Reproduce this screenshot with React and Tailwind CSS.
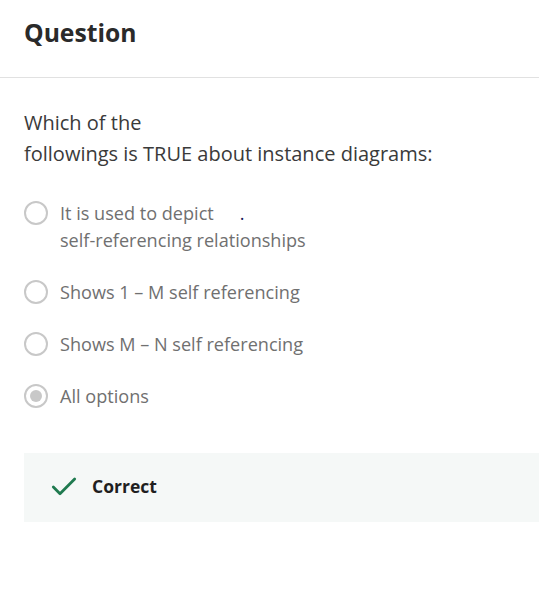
import { Check } from 'lucide-react';

const options = [
  { label: ['It is used to depict', 'self-referencing relationships'], checked: false },
  { label: ['Shows 1 – M self referencing'], checked: false },
  { label: ['Shows M – N self referencing'], checked: false },
  { label: ['All options'], checked: true },
];

const Radio = ({ checked }) => (
  <span className="w-6 h-6 rounded-full border-2 border-[#c8c8c8] flex items-center justify-center shrink-0 bg-white">
    {checked && <span className="w-3 h-3 rounded-full bg-[#c8c8c8]" />}
  </span>
);

export default function App() {
  return (
    <div className="w-[539px] h-[607px] bg-white overflow-hidden font-['Open_Sans',sans-serif]">
      <div className="px-6 pt-[15px] pb-[26px] border-b border-[#e1e1e1]">
        <h2 className="text-[24.7px] font-bold text-[#2a2a2a] leading-[36px]">Question</h2>
      </div>

      <div className="pl-6 pt-[29px]">
        <p className="text-[20px] leading-[31px] text-[#3a3a3a]">
          Which of the
          <br />
          followings is TRUE about instance diagrams:
        </p>

        <div className="mt-[31px] flex flex-col gap-[25px]">
          {options.map((opt, i) => (
            <label key={i} className="flex items-start gap-[12px]">
              <span className="pt-[1px]">
                <Radio checked={opt.checked} />
              </span>
              <span className="text-[18.1px] leading-[27px] text-[#707070]">
                {opt.label.map((line, j) => (
                  <span key={j} className="block">
                    {line}
                    {i === 0 && j === 0 && <span className="ml-[26px] text-[#1a1a5a]">.</span>}
                  </span>
                ))}
              </span>
            </label>
          ))}
        </div>

        <div className="mt-[43px] h-[69px] bg-[#f5f8f7] flex items-center pl-[24px] gap-[12px] pb-[2px]">
          <Check size={32} strokeWidth={2.1} className="text-[#1f7a4f]" />
          <span className="text-[17.5px] font-bold text-[#1f1f1f]">Correct</span>
        </div>
      </div>
    </div>
  );
}
